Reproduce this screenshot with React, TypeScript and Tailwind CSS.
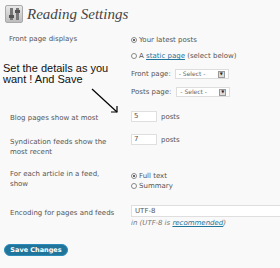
import React from "react";

const label = "shrink-0 text-[7px] leading-[10px] text-[#555]";
const ff = { fontFamily: '"DejaVu Sans", Verdana, sans-serif' } as const;

function Radio({ checked }: { checked?: boolean }) {
  return (
    <span className="inline-flex items-center justify-center w-[6px] h-[6px] rounded-full border border-[#888] bg-white mr-[2px] shrink-0">
      {checked && <span className="w-[2px] h-[2px] rounded-full bg-[#333]" />}
    </span>
  );
}

function Select() {
  return (
    <div className="flex items-center w-[54px] h-[10px] border border-[#ddd] bg-white ml-[4px]">
      <span className="flex-1 text-[6px] leading-[8px] text-[#666] pl-[3px]">- Select -</span>
      <span className="w-[7px] h-[7px] mr-[3px] border border-[#999] bg-[#ddd] flex items-center justify-center text-[4px] leading-none text-[#222]">▼</span>
    </div>
  );
}

function NumInput({ v }: { v: string }) {
  return (
    <div className="w-[26px] h-[11px] border border-[#dfdfdf] bg-white text-[7px] leading-[9px] pl-[2px] text-[#555]">{v}</div>
  );
}

export default function App() {
  return (
    <div className="w-[280px] h-[268px] overflow-hidden bg-[#f9f9f9] relative" style={ff}>
      {/* header */}
      <div className="flex items-center h-[24px] pt-[3px] pl-[5px]">
        <div className="w-[18px] h-[18px] rounded-[2px] border border-[#aaa] bg-gradient-to-b from-[#e8e8e8] to-[#bdbdbd] flex items-center justify-center gap-[3px]">
          <div className="relative w-[3px] h-[12px] bg-[#777]">
            <div className="absolute left-[-1px] top-[7px] w-[5px] h-[3px] bg-[#555]" />
          </div>
          <div className="relative w-[3px] h-[12px] bg-[#777]">
            <div className="absolute left-[-1px] top-[2px] w-[5px] h-[3px] bg-[#555]" />
          </div>
        </div>
        <div
          className="ml-[4px] text-[15px] leading-[18px] italic text-[#464646]"
          style={{ fontFamily: '"Liberation Serif", Georgia, serif' }}
        >
          Reading Settings
        </div>
      </div>

      {/* front page displays */}
      <div className="flex mt-[10px]">
        <div className={`w-[131px] pl-[9px] ${label}`}>Front page displays</div>
        <div className={`flex flex-col ${label} text-[#555]`}>
          <div className="flex items-center mt-[1px]"><Radio checked />Your latest posts</div>
          <div className="flex items-center mt-[6px]">
            <Radio />A&nbsp;<span className="text-[#21759b] underline">static page</span>&nbsp;(select below)
          </div>
          <div className="flex items-center mt-[8px]">Front page:<Select /></div>
          <div className="flex items-center mt-[8px]">Posts page:<span className="w-[1px]" /><Select /></div>
        </div>
      </div>

      {/* blog pages */}
      <div className="flex mt-[13px]">
        <div className={`w-[131px] pl-[10px] pt-[3px] ${label}`}>Blog pages show at most</div>
        <div className={`flex items-center ${label}`}><NumInput v="5" /><span className="ml-[4px]">posts</span></div>
      </div>

      {/* syndication */}
      <div className="flex mt-[11px]">
        <div className={`w-[131px] pl-[10px] pr-[12px] pt-[3px] ${label}`}>Syndication feeds show the most recent</div>
        <div className={`flex items-start ${label}`}>
          <NumInput v="7" /><span className="ml-[4px] mt-[1px]">posts</span>
        </div>
      </div>

      {/* each article */}
      <div className="flex mt-[12px]">
        <div className={`w-[131px] pl-[10px] pr-[16px] ${label}`}>For each article in a feed, show</div>
        <div className={`flex flex-col ${label}`}>
          <div className="flex items-center mt-[2px]"><Radio checked />Full text</div>
          <div className="flex items-center"><Radio />Summary</div>
        </div>
      </div>

      {/* encoding */}
      <div className="flex mt-[14px]">
        <div className={`w-[131px] pl-[10px] pt-[3px] whitespace-nowrap ${label}`}>Encoding for pages and feeds</div>
        <div className="flex flex-col shrink-0">
          <div className="w-[170px] h-[12px] border border-[#dfdfdf] bg-white text-[7px] leading-[10px] pl-[3px] text-[#555]">UTF-8</div>
          <div className="text-[7px] leading-[10px] italic text-[#777] mt-[1px]">
            in (UTF-8 is <span className="text-[#21759b] underline">recommended</span>)
          </div>
        </div>
      </div>

      {/* save */}
      <div className="pl-[4px] mt-[7px]">
        <button className="w-[64px] h-[12px] rounded-full bg-[#21759b] border border-[#298cba] text-white font-bold text-[6.5px] leading-[10px] text-center" style={ff}>
          Save Changes
        </button>
      </div>

      {/* annotation */}
      <div
        className="absolute left-[3px] top-[63px] text-[11px] leading-[11px] text-[#111]"
        style={{ fontFamily: '"Liberation Sans", Arial, sans-serif' }}
      >
        Set the details as you<br />want ! And Save
      </div>
      <svg className="absolute left-0 top-0" width="280" height="268" viewBox="0 0 280 268">
        <line x1="92" y1="89" x2="117" y2="112" stroke="#000" strokeWidth="1.2" />
        <polyline points="111,112 117,112 117,106" fill="none" stroke="#000" strokeWidth="1.2" />
      </svg>
    </div>
  );
}
